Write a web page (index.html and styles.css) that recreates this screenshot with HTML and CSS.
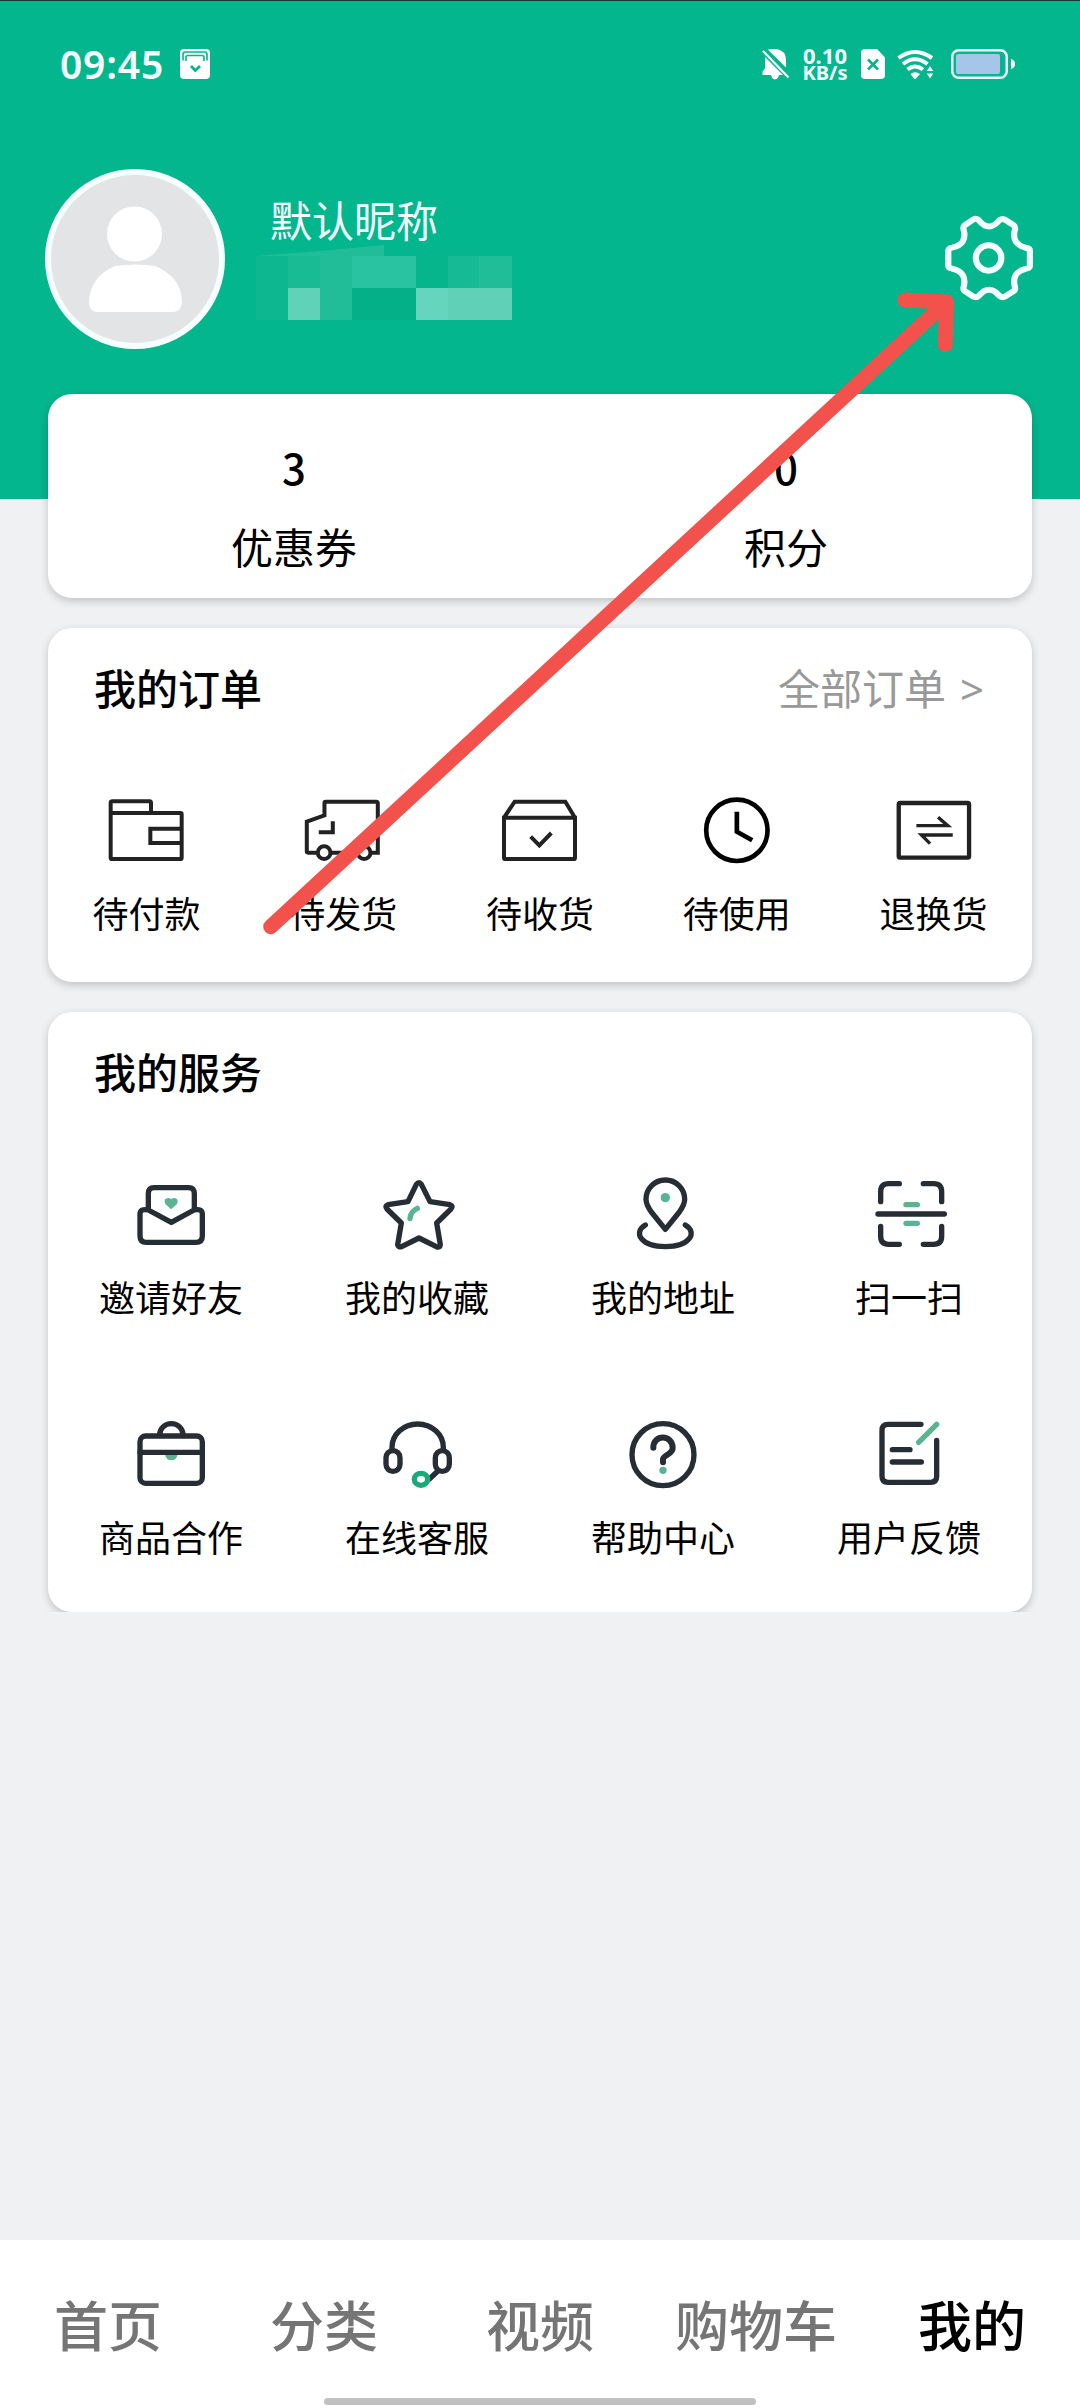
FILE: index.html
```html
<!DOCTYPE html>
<html lang="zh-CN">
<head>
<meta charset="utf-8">
<title>我的</title>
<link rel="stylesheet" href="styles.css">
</head>
<body>
<div class="screen">
  <header class="header">
    <div class="status">
      <span class="time">09:45</span>
      <svg class="st-app" width="30" height="30" viewBox="0 0 30 30"><rect width="30" height="30" rx="4" fill="#fff"/><path d="M3 11.500V5.500Q3 3 5.500 3h19Q27 3 27 5.500V11.500" fill="none" stroke="#04b68d" stroke-width="1.600"/><path d="M6 12V8.500Q6 6.500 8 6.500h14q2 0 2 2V12" fill="none" stroke="#04b68d" stroke-width="1.600"/><path d="M11 17l4.300 4.500L20 17" fill="none" stroke="#04b68d" stroke-width="2.800"/></svg>
      <span class="grow"></span>
      <svg class="st-bell" width="28" height="31" viewBox="0 0 28 31"><path d="M6 0.800Q10 -1 15 0Q23.500 2 24 10v8.500zM3 8L21 26H17q-1 4-4 4.500Q10 30 9 26H.5v-3.500L3 19.500z" fill="#fff"/><path d="M1 2L26.500 28.500" stroke="#fff" stroke-width="2.200"/></svg>
      <span class="net"><span>0.10</span><span>KB/s</span></span>
      <svg class="st-sim" width="24" height="30" viewBox="0 0 24 30"><path d="M4 0H16L24 8.500V26q0 4-4 4H4q-4 0-4-4V4Q0 0 4 0z" fill="#fff"/><path d="M7 10.500l10 10M17 10.500l-10 10" stroke="#04b68d" stroke-width="2.600"/></svg>
      <svg class="st-wifi" width="37" height="30" viewBox="0 0 37 30"><g fill="none" stroke="#fff"><path d="M1.500 9Q18 -3 35 9" stroke-width="4"/><path d="M6 15Q18 5.500 30.500 15" stroke-width="4"/><path d="M10.500 20.500Q18 14.500 26 20.500" stroke-width="4"/></g><path d="M13.500 25q4.500-3.500 9.500 0l-4 4.500q-1 .8-2 0zM33 17l3.200 5h-6.400zM33 29.500l3.200-5h-6.400z" fill="#fff"/></svg>
      <svg class="st-batt" width="64" height="30" viewBox="0 0 64 30"><rect x="1.250" y="1.250" width="54.500" height="27.500" rx="6.500" fill="none" stroke="#f0fffb" stroke-width="2.500"/><rect x="5" y="5" width="44" height="20" rx="2" fill="#a5c5e9"/><path d="M60 10q4 1 4 5t-4 5z" fill="#fff"/></svg>
    </div>
    <div class="profile">
      <svg class="avatar" width="180" height="180" viewBox="0 0 180 180"><circle cx="90" cy="90" r="87" fill="#e3e4e6" stroke="#f5fffd" stroke-width="6"/><circle cx="89.500" cy="65" r="27.500" fill="#fff"/><path d="M44 135Q44 108 70 97Q90 94 110 97Q137 108 137 134Q136 143 127 143H53Q45 143 44 135z" fill="#fff"/></svg>
      <div class="who">
        <div class="nick">默认昵称</div>
        <svg class="mosaic" width="256" height="75" viewBox="256 245 256 75">
          <path d="M256 256l64-5 64-6v11z" fill="#20be98"/>
          <path d="M256 256h32v64h-32z" fill="#0db78f"/><path d="M288 256h32v32h-32z" fill="#18bb93"/>
          <path d="M320 252h32v68h-32z" fill="#21bd98"/><path d="M352 256h64v32h-64z" fill="#2ac3a2"/>
          <path d="M352 288h64v32h-64z" fill="#03b088"/><path d="M416 256h32v32h-32z" fill="#07b58d"/><path d="M448 256h31v32h-31z" fill="#16ba94"/><path d="M479 256h33v32h-33z" fill="#21bd99"/>
          <path d="M288 288h32v32h-32z" fill="#5fd2b8"/><path d="M416 288h32v32h-32z" fill="#65d5bd"/><path d="M448 288h64v32h-64z" fill="#60d0b7"/>
        </svg>
      </div>
      <svg class="gear" width="100" height="100" viewBox="1160 630 290.400 300" preserveAspectRatio="none"><g fill="none" stroke="#f2fffc" stroke-width="18" stroke-linejoin="round"><path d="M1260 658Q1268 654 1275 660Q1305 699 1336 660Q1345 654 1353 660L1376 675Q1382 679 1381 687Q1368 732 1414 744Q1424 745 1424 753V796Q1424 804 1414 806Q1368 817 1381 863Q1382 870 1376 874L1353 889Q1345 894 1336 888Q1305 850 1275 888Q1268 894 1258 889L1236 874Q1230 870 1231 863Q1244 817 1198 806Q1187 804 1187 796V753Q1187 745 1198 743Q1244 732 1231 687Q1230 679 1236 675z"/><ellipse cx="1304" cy="774" rx="37" ry="38"/></g></svg>
    </div>
  </header>
  <main class="content">
    <section class="card assets">
      <div class="asset"><b>3</b><span>优惠券</span></div>
      <div class="asset"><b>0</b><span>积分</span></div>
    </section>
    <section class="card orders">
      <div class="head"><h2>我的订单</h2><a>全部订单<span class="more">&gt;</span></a></div>
      <div class="row">
        <div class="item"><svg class="ico dark" viewBox="175 426 288 288"><rect x="213" y="519" width="213" height="138" rx="4"/><path d="M213 519V489q0-5 5-5h112q4 0 4 5v30" /><path d="M426 566h-94v43h94"/></svg><span>待付款</span></div>
        <div class="item"><svg class="ico dark" viewBox="765.600 426 288 288"><path d="M831 638h-26q-4 0-4-4V545l53-19V489q0-4 4-4h151q5 0 5 5v148H995M951 638H874M837 577h42v-33" /><circle cx="853" cy="638" r="19"/><circle cx="973" cy="638" r="19"/></svg><span>待发货</span></div>
        <div class="item"><svg class="ico dark" viewBox="1356 426 288 288"><path d="M1392 533L1424 485h152l29 48M1392 533h213v120q0 4-4 4h-205q-4 0-4-4zM1472 590l26 26 36-37"/></svg><span>待收货</span></div>
        <div class="item"><svg class="ico dark black" viewBox="446.400 426 288 288"><circle cx="590" cy="571" r="92"/><path d="M590 515v60l46 26"/></svg><span>待使用</span></div>
        <div class="item"><svg class="ico dark" viewBox="1036.800 426 288 288"><rect x="1075" y="489" width="211" height="164" rx="4" stroke-width="13"/><path d="M1128 557h94l-29-25M1237 585h-94l26 26" stroke-width="10"/></svg><span>退换货</span></div>
      </div>
    </section>
    <div class="clip">
    <section class="card services">
      <div class="head"><h2>我的服务</h2></div>
      <div class="grid">
        <div class="item"><svg class="ico" viewBox="249 498 288 288"><path d="M325 630v-49q0-18 17-18h104q17 0 17 18v49M325 630q-25-5-25 12v66q0 19 19 19h149q19 0 19-19v-66q0-17-25-12l-68 37z"/><path class="gf" d="M393 628l-17-16q-7-18 9-18 5 0 8 4 4-4 9-4 16 2 9 18z"/></svg><span>邀请好友</span></div>
        <div class="item"><svg class="ico" viewBox="987 498 288 288"><path d="M1129 553q8-10 15 0l26 52 60 9q11 4 3 13l-43 42 11 65q-1 10-12 6l-52-26-52 26q-11 3-12-6l11-65-43-42q-8-9 3-13l60-9z"/><path class="g" d="M1110 656q1-21 22-31"/></svg><span>我的收藏</span></div>
        <div class="item"><svg class="ico" viewBox="225 498 288 288"><path d="M376 688L334 636Q318 614 318 598A58 58 0 0 1 434 598Q434 614 418 636zM316 675C278 698 303 740 376 740S474 698 436 675"/><circle class="gf" cx="376" cy="593" r="14"/></svg><span>我的地址</span></div>
        <div class="item"><svg class="ico" viewBox="963 498 288 288"><path d="M1022 605v-30q0-24 24-24h32M1150 551h31q24 0 24 24v30M1022 679v30q0 24 24 24h32M1150 733h31q24 0 24-24v-30M1014 642h199"/><path class="g" d="M1098 614h34M1098 670h34"/></svg><span>扫一扫</span></div>
        <div class="item"><svg class="ico" viewBox="249 78 288 288"><path class="gf" d="M375 222q3 19 19 19t19-19z"/><rect x="300" y="168" width="187" height="142" rx="17"/><path d="M300 217h187M359 164a35 33 0 0 1 70 0"/></svg><span>商品合作</span></div>
        <div class="item"><svg class="ico" viewBox="987 78 288 288"><path d="M1056 208v-6a77 70 0 0 1 154 0v6M1193 274l-24 22"/><rect x="1038" y="212" width="42" height="62" rx="21"/><rect x="1186" y="212" width="42" height="62" rx="21"/><ellipse cx="1143" cy="298" rx="20" ry="18" class="mic"/></svg><span>在线客服</span></div>
        <div class="item"><svg class="ico" viewBox="225 78 288 288"><circle cx="369" cy="224" r="93"/><path d="M340 203C340 162 398 163 398 204 398 223 369 226 369 238v9" stroke-width="18"/><circle class="gf" cx="369" cy="271" r="11"/></svg><span>帮助中心</span></div>
        <div class="item"><svg class="ico" viewBox="963 78 288 288"><path d="M1143 133h-99q-18 0-18 18v138q0 18 18 18h128q18 0 18-18V181M1057 209h53M1057 246h87"/><path class="g" d="M1136 187l54-54"/></svg><span>用户反馈</span></div>
      </div>
    </section>
    </div>
  </main>
  <nav class="tabs">
    <a>首页</a><a>分类</a><a>视频</a><a>购物车</a><a class="on">我的</a>
    <i class="home"></i>
  </nav>
  <svg class="arrow" width="1080" height="2408" viewBox="0 0 1080 2408"><path d="M270.700 926.700L946.500 302M905 300L946.500 302 945.300 344.500"/></svg>
</div>
</body>
</html>
```
FILE: styles.css
```css
* { box-sizing: border-box; }
body { margin: 0; font-family: "Noto Sans CJK SC", sans-serif; color: #000; }
.screen { position: relative; width: 1080px; height: 2408px; display: flex; flex-direction: column; background: #eff1f3; overflow: hidden; }
.header { height: 499px; flex: none; background: #04b68d; border-top: 1px solid #123c30; }

.status { display: flex; align-items: center; height: 30px; margin-top: 48px; padding: 0 65px 0 60px; color: #f4fffc; }
.time { width: 120px; font: 600 39px/30px "Noto Sans", sans-serif; letter-spacing: .8px; }
.grow { flex: 1; }
.net { display: flex; flex-direction: column; align-items: center; width: 46px; margin: 0 13px 0 12px; font: 700 20px/18px "Noto Sans", sans-serif; }
.net span:first-child { font-size: 22px; }
.st-wifi { margin-left: 12px; }
.st-batt { margin-left: 17px; }

.profile { display: flex; margin-top: 90px; padding: 0 41px 0 45px; }
.avatar { flex: none; }
.who { flex: 1; display: flex; flex-direction: column; padding: 26px 0 0 31px; }
.nick { height: 50px; padding-left: 14px; font-size: 42px; line-height: 48px; color: #f2fffb; }
.gear { margin-top: 41px; }

.content { flex: 1; padding: 0 48px; margin-top: -105px; }
.card { background: #fff; border-radius: 24px; box-shadow: 0 3px 9px rgba(0,0,0,.2); }
.assets { display: flex; height: 204px; padding-top: 52px; }
.asset { flex: 1; display: flex; flex-direction: column; align-items: center; gap: 37px; font-size: 42px; line-height: 42px; }
.asset b { font-weight: 500; }
.orders { height: 354px; margin-top: 30px; }
.clip { margin: 30px -20px 0; padding: 0 20px; height: 600px; clip-path: inset(-12px 0 0 0); }
.services { height: 600px; }
.head { display: flex; justify-content: space-between; height: 80px; padding: 38px 48px 0 46px; font-size: 42px; line-height: 42px; }
.head h2 { margin: 0; font-size: 42px; font-weight: 500; }
.head a { color: #999; }
.more { margin-left: 14px; font-family: "Noto Sans", sans-serif; }
.row, .grid { display: grid; margin-top: 74px; }
.row { grid-template-columns: repeat(5, 1fr); }
.grid { grid-template-columns: repeat(4, 1fr); row-gap: 92px; }
.item { display: flex; flex-direction: column; align-items: center; gap: 16px; font-size: 36px; line-height: 36px; }

.ico { width: 96px; height: 96px; fill: none; stroke: #262d35; stroke-width: 16; stroke-linecap: round; stroke-linejoin: round; }
.dark { stroke: #222; stroke-width: 12; stroke-linecap: butt; stroke-linejoin: miter; }
.black { stroke: #000; stroke-width: 14; }
.g { stroke: #5bb491; }
.gf { fill: #5bb491; stroke: none; }
.mic { stroke: #18aa78; }

.tabs { position: relative; flex: none; display: grid; grid-template-columns: repeat(5, 1fr); height: 168px; padding-top: 54px; background: #fff; text-align: center; font-size: 54px; line-height: 60px; font-weight: 500; color: #757575; }
.on { color: #000; }
.home { position: absolute; left: 324px; bottom: 3px; width: 432px; height: 7px; border-radius: 4px; background: #c1c1c1; }
.arrow { position: absolute; left: 0; top: 0; fill: none; stroke: #f2524b; stroke-width: 15; stroke-linecap: round; stroke-linejoin: round; }
```
